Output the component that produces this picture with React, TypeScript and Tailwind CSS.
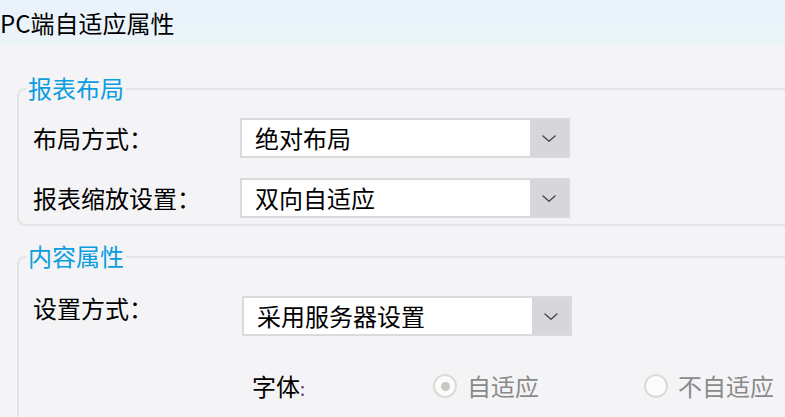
import React from "react";

const FONT = { fontFamily: '"Noto Sans CJK SC", "Noto Sans", sans-serif' };

function Chevron() {
  return (
    <svg width="16" height="9" viewBox="0 0 16 9" fill="none">
      <path d="M2 2 L8 7.2 L14 2" stroke="#4a4a4a" strokeWidth="1.5" strokeLinecap="round" strokeLinejoin="round" />
    </svg>
  );
}

function Select({ value }: { value: string }) {
  return (
    <div className="flex h-[40px] w-[330px] border-2 border-[#dadadc] bg-white">
      <div className="flex flex-1 items-center pl-[13px] text-[24px] leading-none text-black">{value}</div>
      <div className="flex w-[38px] items-center justify-center bg-[#d7d7db]">
        <Chevron />
      </div>
    </div>
  );
}

function Radio({ checked }: { checked: boolean }) {
  return (
    <div className="flex h-[24px] w-[24px] items-center justify-center rounded-full border-2 border-[#dcdad4] bg-[#fbfbfb]">
      {checked && <div className="h-[9px] w-[9px] rounded-full bg-[#c9c7c1]" />}
    </div>
  );
}

function Title({ text }: { text: string }) {
  return (
    <div className="-mt-[15px] ml-[7px] w-fit bg-[#f4f4f6] px-[2px] text-[24px] leading-[26px] text-[#0a9de0]">
      {text}
    </div>
  );
}

export default function App() {
  return (
    <div className="h-[417px] w-[785px] overflow-hidden bg-[#f4f4f6]" style={FONT}>
      <div className="flex h-[46px] items-center bg-gradient-to-b from-[#e9f2fb] to-[#ebf5f8] text-[24px] leading-none text-black">
        <span>PC端自适应属性</span>
      </div>
      <div className="pl-[17px] pt-[42px]">
        <div className="h-[138px] w-[800px] rounded-[8px] border-2 border-[#e3e3e6]">
          <Title text="报表布局" />
          <div className="mt-[17px] flex items-center">
            <div className="w-[221px] pl-[14px] text-[24px] leading-none text-black">布局方式：</div>
            <Select value="绝对布局" />
          </div>
          <div className="mt-[20px] flex items-center">
            <div className="w-[221px] pl-[14px] text-[24px] leading-none text-black">报表缩放设置：</div>
            <Select value="双向自适应" />
          </div>
        </div>
        <div className="mt-[30px] h-[200px] w-[800px] rounded-[8px] border-2 border-[#e3e3e6]">
          <Title text="内容属性" />
          <div className="mt-[27px] flex items-start">
            <div className="w-[223px] pl-[14px] pt-[1px] text-[24px] leading-[22px] text-black">设置方式：</div>
            <Select value="采用服务器设置" />
          </div>
          <div className="mt-[35px] flex h-[30px] items-center pl-[233px] text-[24px] leading-none">
            <div className="w-[181px] text-black">
              字体<span className="text-[18px] text-[#6b2a78]">:</span>
            </div>
            <div className="flex w-[211px] items-center gap-[10px]">
              <Radio checked />
              <span className="text-[#8a8a8a]">自适应</span>
            </div>
            <div className="flex items-center gap-[10px]">
              <Radio checked={false} />
              <span className="text-[#8a8a8a]">不自适应</span>
            </div>
          </div>
        </div>
      </div>
    </div>
  );
}
